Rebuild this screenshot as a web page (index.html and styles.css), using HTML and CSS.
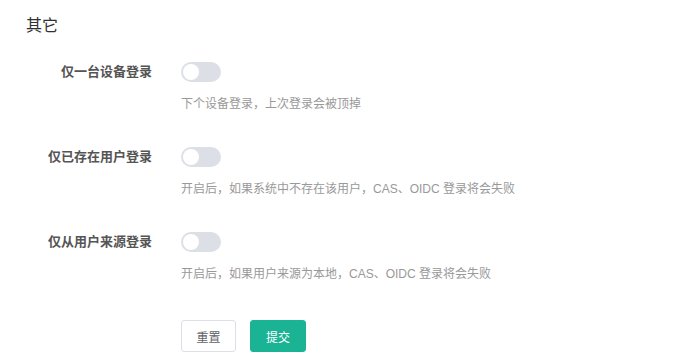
FILE: index.html
```html
<!DOCTYPE html>
<html lang="zh-CN">
<head>
<meta charset="utf-8">
<title>其它</title>
<link rel="stylesheet" href="styles.css">
</head>
<body>
<div class="page">
  <h2 class="title">其它</h2>
  <form class="form">
    <div class="item">
      <label class="label">仅一台设备登录</label>
      <div class="content">
        <span class="switch"><span class="knob"></span></span>
        <div class="tip">下个设备登录，上次登录会被顶掉</div>
      </div>
    </div>
    <div class="item">
      <label class="label">仅已存在用户登录</label>
      <div class="content">
        <span class="switch"><span class="knob"></span></span>
        <div class="tip">开启后，如果系统中不存在该用户，CAS、OIDC 登录将会失败</div>
      </div>
    </div>
    <div class="item">
      <label class="label">仅从用户来源登录</label>
      <div class="content">
        <span class="switch"><span class="knob"></span></span>
        <div class="tip">开启后，如果用户来源为本地，CAS、OIDC 登录将会失败</div>
      </div>
    </div>
    <div class="actions">
      <button type="button" class="btn">重置</button>
      <button type="button" class="btn btn-primary">提交</button>
    </div>
  </form>
</div>
</body>
</html>
```

FILE: styles.css
```css
* { box-sizing: border-box; }
html, body { margin: 0; padding: 0; background: #fff; }
body {
  font-family: "Liberation Sans", "Noto Sans CJK SC", sans-serif;
  color: #606266;
}
.page { padding: 14px 0 0 26px; }
.title {
  margin: 0;
  font-size: 16px;
  line-height: 24px;
  font-weight: normal;
  color: #303133;
}
.form { margin-top: 24px; }
.item {
  display: grid;
  grid-template-columns: 126px 1fr;
  column-gap: 29px;
  margin-bottom: 33px;
}
.label {
  text-align: right;
  font-size: 13px;
  line-height: 20px;
  font-weight: bold;
  color: #555;
}
.content { display: flex; flex-direction: column; align-items: flex-start; }
.switch {
  display: block;
  width: 40px;
  height: 20px;
  border-radius: 10px;
  background: #dcdfe6;
  position: relative;
}
.knob {
  position: absolute;
  left: 2px;
  top: 2px;
  width: 16px;
  height: 16px;
  border-radius: 50%;
  background: #fff;
}
.tip {
  margin-top: 12px;
  font-size: 12px;
  line-height: 20px;
  color: #999;
}
.actions {
  display: flex;
  gap: 14px;
  padding-left: 155px;
  margin-top: 36px;
}
.btn {
  height: 32px;
  width: 55px;
  padding: 0;
  border: 1px solid #dcdfe6;
  border-radius: 3px;
  background: #fff;
  color: #606266;
  font-family: inherit;
  font-size: 12px;
  cursor: pointer;
}
.btn-primary {
  width: 56px;
  background: #1ab394;
  border-color: #1ab394;
  color: #fff;
}
```
